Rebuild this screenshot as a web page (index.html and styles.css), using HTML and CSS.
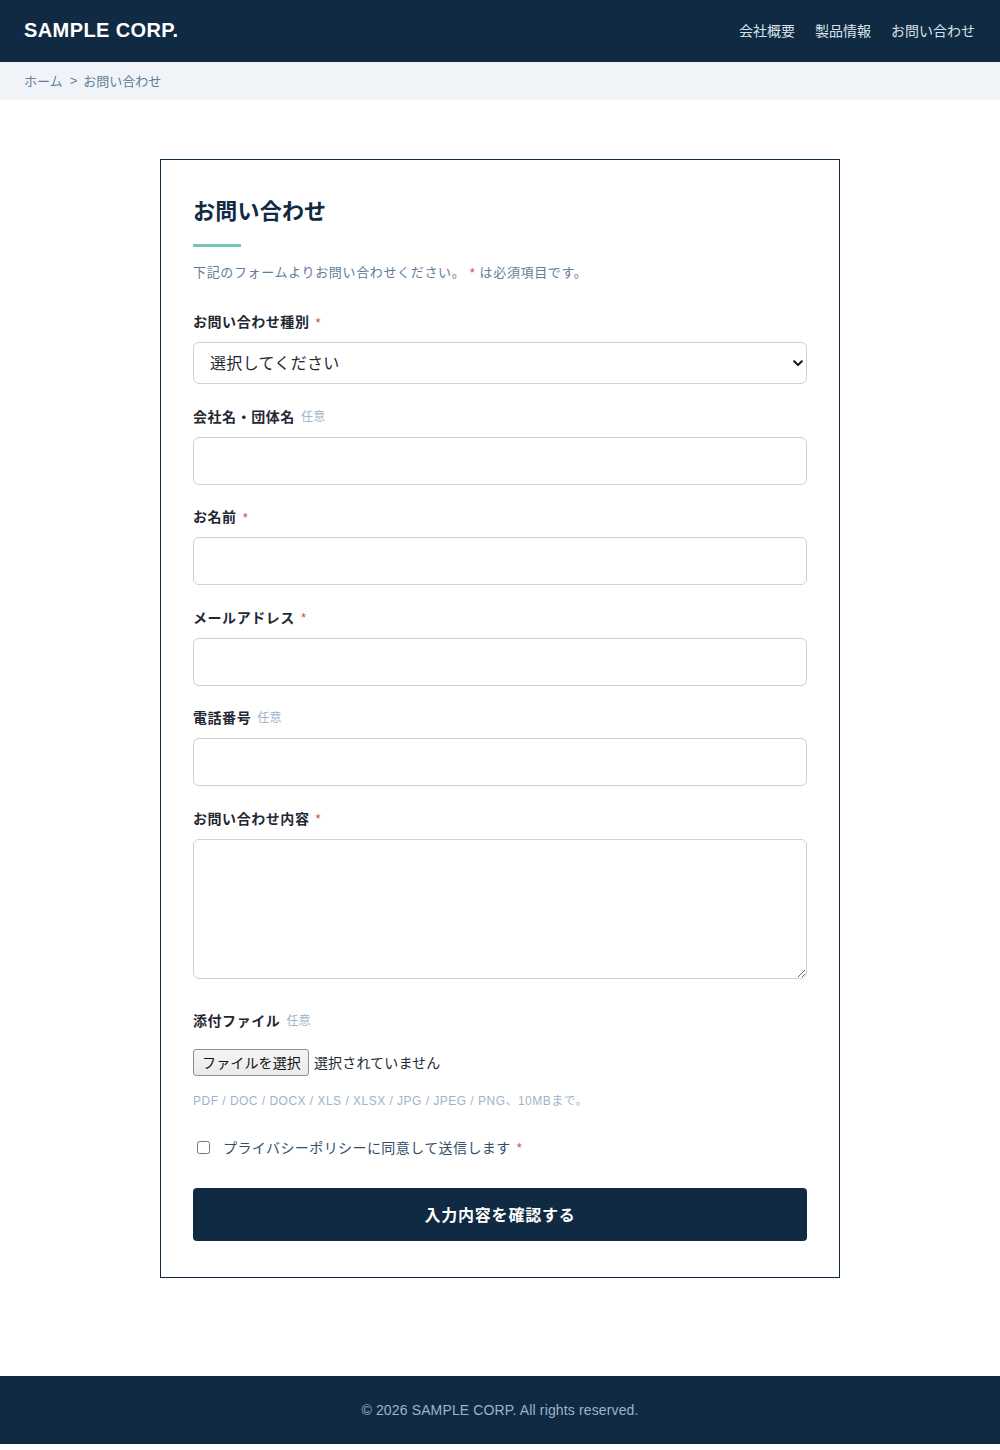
FILE: index.html
```html
<!DOCTYPE html>
<html lang="ja">
<head>
<meta charset="utf-8">
<title>お問い合わせ | SAMPLE CORP.</title>
<link rel="stylesheet" href="styles.css">
</head>
<body>
<header class="site-header">
  <div class="logo">SAMPLE CORP.</div>
  <nav class="global-nav">
    <a href="#">会社概要</a>
    <a href="#">製品情報</a>
    <a href="#">お問い合わせ</a>
  </nav>
</header>

<div class="breadcrumb">
  <a href="#">ホーム</a><span class="sep">&gt;</span><span>お問い合わせ</span>
</div>

<main class="main">
  <section class="card">
    <h1 class="card-title">お問い合わせ</h1>
    <div class="title-bar"></div>
    <p class="lead">下記のフォームよりお問い合わせください。 <span class="req">*</span> は必須項目です。</p>

    <form class="form">
      <div class="field">
        <label class="field-label" for="kind">お問い合わせ種別<span class="req">*</span></label>
        <div class="select-wrap">
          <select id="kind" class="control select">
            <option>選択してください</option>
            <option>製品について</option>
            <option>採用について</option>
            <option>その他</option>
          </select>
          <svg class="chevron" width="10" height="7" viewBox="0 0 10 7"><path d="M1.2 1.3L5 5.1l3.8-3.8" fill="none" stroke="#111" stroke-width="2" stroke-linecap="round" stroke-linejoin="round"/></svg>
        </div>
      </div>

      <div class="field">
        <label class="field-label" for="company">会社名・団体名<span class="opt">任意</span></label>
        <input id="company" class="control input" type="text">
      </div>

      <div class="field">
        <label class="field-label" for="name">お名前<span class="req">*</span></label>
        <input id="name" class="control input" type="text">
      </div>

      <div class="field">
        <label class="field-label" for="email">メールアドレス<span class="req">*</span></label>
        <input id="email" class="control input" type="email">
      </div>

      <div class="field">
        <label class="field-label" for="tel">電話番号<span class="opt">任意</span></label>
        <input id="tel" class="control input" type="tel">
      </div>

      <div class="field field-message">
        <label class="field-label" for="message">お問い合わせ内容<span class="req">*</span></label>
        <textarea id="message" class="control textarea"></textarea>
      </div>

      <div class="field field-file">
        <div class="field-label">添付ファイル<span class="opt">任意</span></div>
        <div class="file-row">
          <label class="file-btn"><input class="file-input" type="file">ファイルを選択</label>
          <span class="file-name">選択されていません</span>
        </div>
        <p class="hint">PDF / DOC / DOCX / XLS / XLSX / JPG / JPEG / PNG、10MBまで。</p>
      </div>

      <label class="agree">
        <input type="checkbox" class="agree-check">
        <span>プライバシーポリシーに同意して送信します</span><span class="req">*</span>
      </label>

      <button type="button" class="submit">入力内容を確認する</button>
    </form>
  </section>
</main>

<footer class="site-footer">
  <p>© 2026 SAMPLE CORP. All rights reserved.</p>
</footer>
</body>
</html>
```

FILE: styles.css
```css
* {
  box-sizing: border-box;
}

html, body {
  margin: 0;
  padding: 0;
  background: #ffffff;
}

body {
  font-family: "Liberation Sans", "Noto Sans CJK JP", sans-serif;
  color: #1f2933;
  font-size: 14px;
}

a {
  color: inherit;
  text-decoration: none;
}

/* ---- header ---- */
.site-header {
  height: 62px;
  background: #102a43;
  display: flex;
  align-items: center;
  justify-content: space-between;
  padding: 0 25px 0 24px;
}

.logo {
  color: #ffffff;
  font-size: 20px;
  font-weight: 700;
  letter-spacing: 0.02em;
  line-height: 1;
  margin-top: -2px;
}

.global-nav {
  display: flex;
  gap: 20px;
}

.global-nav a {
  color: #d9e2ec;
  font-size: 14px;
  line-height: 20px;
}

/* ---- breadcrumb ---- */
.breadcrumb {
  height: 38px;
  background: #f0f4f8;
  display: flex;
  align-items: center;
  padding: 0 24px 1px;
  font-size: 13px;
  color: #627d98;
}

.breadcrumb .sep {
  margin: 0 6px 0 7px;
}

/* ---- main / card ---- */
.main {
  padding: 59px 0 98px;
}

.card {
  width: 680px;
  margin: 0 auto;
  border: 1px solid #102a43;
  padding: 36px 32px 36px;
  background: #ffffff;
}

.card-title {
  margin: 0;
  font-size: 22px;
  line-height: 30px;
  height: 30px;
  font-weight: 700;
  color: #102a43;
  letter-spacing: 0.01em;
  padding-top: 1px;
}

.title-bar {
  width: 48px;
  height: 3px;
  background: #72c7bc;
  margin-top: 18px;
}

.lead {
  margin: 15px 0 28px;
  height: 20px;
  font-size: 13px;
  line-height: 20px;
  color: #627d98;
  letter-spacing: 0.05em;
  padding-top: 1px;
}

.req {
  color: #d64545;
  margin-left: 6px;
  font-weight: 400;
  font-size: 13px;
  line-height: 1;
}

.lead .req {
  margin-left: 0;
}

.opt {
  margin-left: 6px;
  font-size: 12px;
  font-weight: 400;
  color: #9fb3c8;
  line-height: 1;
  letter-spacing: 0.02em;
}

/* ---- fields ---- */
.field {
  margin-bottom: 20.5px;
}

.field-label {
  display: flex;
  align-items: center;
  height: 24px;
  font-size: 14px;
  line-height: 1;
  font-weight: 700;
  color: #1f2933;
  letter-spacing: 0.04em;
  margin-bottom: 8px;
}

.control {
  display: block;
  width: 100%;
  border: 1px solid #cbd2d9;
  border-radius: 6px;
  background: #ffffff;
  font-family: inherit;
  font-size: 16px;
  color: #1f2933;
  outline: none;
}

.select-wrap {
  position: relative;
}

.select {
  height: 42px;
  padding: 0 32px 0 16px;
  appearance: none;
  -webkit-appearance: none;
  letter-spacing: 0.02em;
}

.chevron {
  position: absolute;
  right: 4px;
  top: 18px;
  pointer-events: none;
}

.input {
  height: 48px;
  padding: 0 14px;
}

.textarea {
  height: 140px;
  padding: 12px 14px;
  resize: vertical;
}

.field-message {
  margin-bottom: 30px;
}

/* ---- file ---- */
.field-file .field-label {
  margin-bottom: 16px;
}

.file-row {
  display: flex;
  align-items: center;
  gap: 5px;
  height: 27px;
}

.file-input {
  position: absolute;
  width: 1px;
  height: 1px;
  opacity: 0;
  overflow: hidden;
}

.file-btn {
  position: relative;
  display: inline-flex;
  align-items: center;
  height: 27px;
  padding: 0 7px 0 8px;
  border: 1px solid #8f8f8f;
  border-radius: 3px;
  background: linear-gradient(#f6f6f6, #e9e9e9);
  font-size: 14px;
  color: #111111;
  letter-spacing: 0.01em;
}

.file-name {
  font-size: 14px;
  color: #1f2933;
  letter-spacing: 0.01em;
}

.hint {
  margin: 16px 0 0;
  height: 18px;
  font-size: 12px;
  line-height: 18px;
  color: #9fb3c8;
  letter-spacing: 0.04em;
}

/* ---- agreement ---- */
.agree {
  display: flex;
  align-items: center;
  height: 24px;
  margin-top: 26px;
  font-size: 14px;
  line-height: 1;
  color: #334e68;
  letter-spacing: 0.03em;
}

.agree-check {
  width: 13px;
  height: 13px;
  margin: 0 13px 0 4px;
}

.agree .req {
  margin-left: 6px;
}

/* ---- submit ---- */
.submit {
  display: block;
  width: 100%;
  height: 53px;
  margin-top: 28px;
  border: none;
  border-radius: 4px;
  background: #102a43;
  color: #ffffff;
  font-family: inherit;
  font-size: 16px;
  font-weight: 700;
  letter-spacing: 0.05em;
  cursor: pointer;
}

/* ---- footer ---- */
.site-footer {
  height: 68px;
  background: #102a43;
  display: flex;
  align-items: center;
  justify-content: center;
}

.site-footer p {
  margin: 0;
  font-size: 14px;
  color: #9fb3c8;
  letter-spacing: 0.01em;
}
```
